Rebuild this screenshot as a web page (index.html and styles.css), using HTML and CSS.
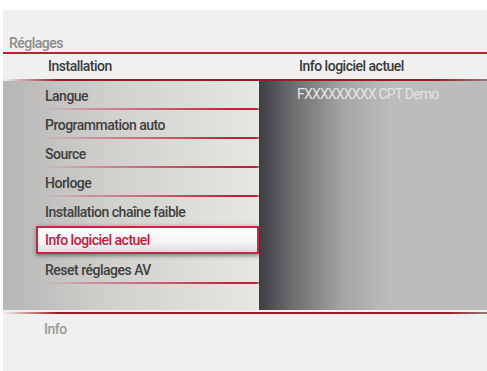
FILE: index.html
```html
<!DOCTYPE html>
<html lang="fr">
<head>
  <meta charset="UTF-8">
  <title>Réglages</title>
  <link rel="stylesheet" href="styles.css">
</head>
<body>

  <div class="screen">
    <div class="title">Réglages</div>

    <div class="head">
      <div class="head-left">Installation</div>
      <div class="head-right">Info logiciel actuel</div>
    </div>

    <div class="panels">
      <ul class="menu">
        <li class="item">Langue</li>
        <li class="item">Programmation auto</li>
        <li class="item">Source</li>
        <li class="item">Horloge</li>
        <li class="item plain">Installation chaîne faible</li>
        <li class="item selected"><span>Info logiciel actuel</span></li>
        <li class="item">Reset réglages AV</li>
      </ul>
      <div class="detail">FXXXXXXXXX CPT Demo</div>
    </div>

    <div class="info">Info</div>
  </div>

</body>
</html>
```

FILE: styles.css
```css
body {
  font-family: Roboto, "Liberation Sans", sans-serif;
  margin: 0;
  background-color: #fff;
  font-size: 14px;
  font-weight: 500;
  letter-spacing: -0.5px;
}
.screen {
  margin: 10px 0 0 3px;
  height: 361px;
  background-color: #eff0ef;
}
.title {
  height: 44px;
  line-height: 18px;
  padding: 24px 0 0 6px;
  box-sizing: border-box;
  color: #8c8c8c;
  border-bottom: 2px solid #c01d33;
}
.head {
  display: grid;
  grid-template-columns: 256px 1fr;
  height: 27px;
  line-height: 25px;
  color: #3a3a3a;
  background:
    linear-gradient(to right, rgba(155, 24, 32, 0) 0, #9e1a22 55px, #9e1a22 430px, #8c7a76 100%) left bottom / 100% 2px no-repeat;
}
.head-left {
  padding-left: 45px;
}
.head-right {
  padding-left: 40px;
}
.panels {
  display: grid;
  grid-template-columns: 256px 1fr;
  height: 229px;
}
.menu {
  list-style: none;
  margin: 0;
  padding: 0;
  background: linear-gradient(to right, #b6b6b6, #d3d2ce 45%, #e6e6e2);
}
.item {
  height: 29px;
  line-height: 30px;
  padding-left: 42px;
  color: #404040;
  background:
    linear-gradient(#7a7a7a, #7a7a7a) right bottom / 2px 2px no-repeat,
    linear-gradient(to right, rgba(192, 32, 58, 0) 42px, rgba(192, 32, 58, 0.35) 90px, #c0203a 230px) left bottom / 254px 2px no-repeat;
}
.item.plain {
  background: none;
}
.item.selected {
  padding-left: 33px;
  background: none;
}
.item.selected span {
  display: block;
  height: 28px;
  line-height: 25px;
  padding-left: 7px;
  box-sizing: border-box;
  color: #c41a3a;
  border: 2px solid #cc2444;
  background: linear-gradient(#fff, #f4f4f4 60%, #dcdcdc);
  box-shadow: 0 2px 4px rgba(0, 0, 0, 0.35), 3px 0 4px rgba(0, 0, 0, 0.15);
}
.detail {
  padding-left: 38px;
  line-height: 27px;
  color: #e4e4e4;
  font-weight: 400;
  letter-spacing: -0.8px;
  background: linear-gradient(to right, #3d3e44 0, #6b6b6d 32px, #a3a3a3 82px, #b6b6b6 115px, #bcbcbc 135px);
}
.info {
  padding: 7px 0 0 41px;
  line-height: 20px;
  color: #9a9a9a;
  border-top: 2px solid transparent;
  background:
    linear-gradient(to right, rgba(155, 24, 32, 0) 0, #9e1a22 55px, #9e1a22 440px, #8c7a76 100%) left top / 100% 2px no-repeat;
}
```
